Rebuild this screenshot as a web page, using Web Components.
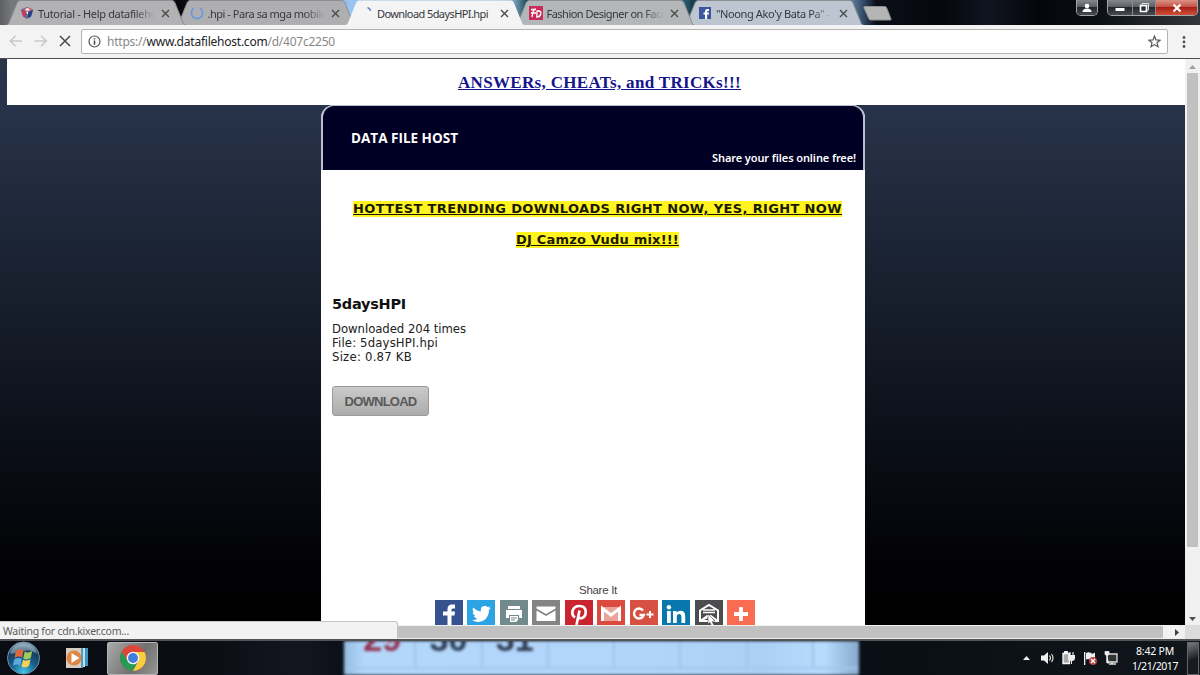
<!DOCTYPE html>
<html lang="en">
<head>
<meta charset="utf-8">
<title>Download 5daysHPI.hpi</title>
<style>
  html, body { margin: 0; height: 100%; overflow: hidden; }
  body { font-family: "Noto Sans", sans-serif; }
</style>
</head>
<body>
<desktop-screen></desktop-screen>

<script>
function define(name, html, setup) {
  customElements.define(name, class extends HTMLElement {
    connectedCallback() {
      if (this.shadowRoot) return;
      this.attachShadow({ mode: "open" });
      this.shadowRoot.innerHTML = typeof html === "function" ? html(this) : html;
      if (setup) setup(this);
    }
  });
}

const FAVICONS = {
  cube: `<path d="M1 3.500 7 1l6 2.500-2 7L7 13 3 10.500z" fill="#5a69a5"/><path d="m1 3.500 5 2.500v6L3 10z" fill="#c33b54"/><path d="m7 1 6 2.500L7 6 3 4z" fill="#d65a68"/><path d="M8 6.500 13 4l-2 6.500L8 12z" fill="#263f86"/><path d="m5 3 3-1 2 2-3 1zM6 6l2-.5V9z" fill="#eee"/>`,
  spinner: `<path d="M4 2.200a5.600 5.600 0 1 0 6 0" fill="none" stroke="#6d9bd8" stroke-width="1.900"/>`,
  tick: `<path d="M8.500 1.500q2.500.8 3.200 3.200" fill="none" stroke="#5c82c4" stroke-width="1.600"/>`,
  fd: `<path fill="#c92c5c" d="M0 0h14v14H0z"/><path d="M2 3.500h5M4.500 3.500 3 11M2 7h5M8 5h1.500q3 0 2.300 3-.7 3-4 3zM6.500 2.500l-1 2" fill="none" stroke="#fff" stroke-width="1.300"/>`,
  fb: `<path fill="#3b579d" d="M1 1h12v12H1z"/><path d="M7 13V8.500H5.500v-2H7V5.300Q7 3 9.300 3H11v2H9.700q-.6 0-.6.700v.8H11l-.3 2H9.100V13z" fill="#fff"/>`,
};

define("browser-tab", el => `
  <style>
    :host { display: block; flex: none; position: relative; width: 179.500px; height: 25px; margin-right: -10px; z-index: var(--z, 1); }
    .shape { position: absolute; inset: 0; }
    .row { position: relative; display: flex; align-items: center; height: 26px; padding-left: 14px; }
    .icon { flex: none; }
    .title { width: 118px; margin-left: 4px; overflow: hidden; white-space: nowrap; font-size: 11px; color: #35383c;
      -webkit-mask: linear-gradient(90deg, #000 82%, transparent 99%); }
    :host([active]) .title { -webkit-mask: none; }
    .close { margin-left: 5px; }
  </style>
  <svg class="shape" width="180" height="25">
    <path d="M0 25.500 2.500 24 11 3Q12 .5 14 .5H166Q168 .5 169 3L177.500 24 180 25.500z"
      fill="${el.getAttribute("fill")}" stroke="${el.hasAttribute("active") ? "none" : "#8b8d91"}"/>
  </svg>
  <div class="row">
    <svg class="icon" width="14" height="14">${FAVICONS[el.getAttribute("icon")]}</svg>
    <div class="title"><slot></slot></div>
    <svg class="close" width="9" height="9"><path d="m1 1 7 7M8 1 1 8" stroke="#4a4a4a" stroke-width="1.400"/></svg>
  </div>
`);

define("window-buttons", `
  <style>
    :host { display: flex; gap: 9px; align-items: flex-start; }
    .group { display: flex; height: 15px; border: 1px solid #a3a5aa; border-top: 0; border-radius: 0 0 5px 5px; overflow: hidden; }
    .b { display: flex; align-items: center; justify-content: center; height: 15px;
      background: linear-gradient(#85888d, #5b5e63 45%, #24272c 50%, #484b50); }
    .b + .b { border-left: 1px solid #8a8c91; }
    .close { background: linear-gradient(#d99386, #c55445 45%, #a92015 50%, #cf5038); }
  </style>
  <div class="group"><div class="b" style="width:20px"><svg width="12" height="12"><circle cx="6" cy="4" r="2.300" fill="#fff"/><path d="M1.500 10q0-3.500 4.500-3.500t4.500 3.500z" fill="#fff"/></svg></div></div>
  <div class="group">
    <div class="b" style="width:24px"><svg width="12" height="10"><path fill="#fff" d="M1.500 5h9v3h-9z"/></svg></div>
    <div class="b" style="width:22px"><svg width="12" height="12"><path d="M4 3V1.500h6.500V8H9" fill="none" stroke="#ddd"/><path d="M2.500 3.500h6v6h-6z" fill="none" stroke="#fff" stroke-width="1.700"/></svg></div>
    <div class="b close" style="width:41px"><svg width="12" height="10"><path d="m2.500 1.500 7 7m0-7-7 7" stroke="#fff" stroke-width="2.200"/></svg></div>
  </div>
`);

define("tab-strip", `
  <style>
    :host { display: flex; height: 25px; padding-left: 6px;
      background: linear-gradient(90deg, #5e6064 0, #77787c 12px, #24252c 165px, #050609 178px, #171b23 200px, #7eaee0 335px, #9ac5f0 350px, #94b9d8 510px, #1d4c59 527px, #5f98bd 670px, #163f4d 692px, #8bb3da 840px, #344c69 863px, #0b0f18 876px, #05070c 940px, #101520 990px, #03050a 1040px, #0c1017 1100px, #34373d 1200px); }
    .new { margin: 6px 0 0 9px; }
    window-buttons { margin: 0 2px 0 auto; }
  </style>
  <browser-tab icon="cube" fill="#b2b2b4" style="--z:4"><fit-text width="119">Tutorial - Help datafileho</fit-text></browser-tab>
  <browser-tab icon="spinner" fill="#afafb1" style="--z:3"><fit-text width="119">.hpi - Para sa mga mobile</fit-text></browser-tab>
  <browser-tab icon="tick" fill="#f4f4f4" active style="--z:6"><fit-text width="111">Download 5daysHPI.hpi</fit-text></browser-tab>
  <browser-tab icon="fd" fill="#b3b7ba" style="--z:3"><fit-text width="120">Fashion Designer on Face</fit-text></browser-tab>
  <browser-tab icon="fb" fill="#bdc5d1" style="--z:2"><fit-text width="114">"Noong Ako'y Bata Pa" -</fit-text></browser-tab>
  <svg class="new" width="30" height="15"><path d="M1.500.500h20q1.500 0 2 1l4.500 11.500q.5 1-1 1H8q-1.500 0-2-1L1 2q-.500-1.500.500-1.500z" fill="#b5b5b5" stroke="#8e9092"/></svg>
  <window-buttons></window-buttons>
`);

define("tool-bar", `
  <style>
    :host { display: flex; align-items: flex-start; box-sizing: border-box; height: 34px; background: #f3f3f3; border-bottom: 1px solid #4b5057; padding: 4px 0 0 8px; }
    .box { display: flex; align-items: center; box-sizing: border-box; width: 1087px; height: 25px; margin-left: 9px; padding: 0 6px; background: #fff; border: 1px solid #b4b4b4; border-radius: 2px; }
    .url { margin-left: 6px; font-size: 12px; color: #888; }
    b { font-weight: 400; color: #222; }
    .star { margin-left: auto; }
    .nav { margin-top: 4px; }
    .menu { margin: 6px 0 0 12px; }
  </style>
  <svg class="nav" width="64" height="16" fill="none" stroke-width="1.600">
    <path d="M14 8H2.500M7.500 2.800 2.300 8l5.200 5.200" stroke="#c9c9c9"/>
    <path d="M26.500 8H38M33 2.800 38.200 8 33 13.200" stroke="#c9c9c9"/>
    <path d="m52 3 10 10M62 3 52 13" stroke="#484848" stroke-width="1.500"/>
  </svg>
  <div class="box">
    <svg width="13" height="13"><circle cx="6.500" cy="6.500" r="5.500" fill="none" stroke="#555" stroke-width="1.200"/><path d="M6.500 5.500v4.200M6.500 3.200v1.300" stroke="#444" stroke-width="1.500"/></svg>
    <div class="url"><fit-text width="228">https://<b>www.datafilehost.com</b>/d/407c2250</fit-text></div>
    <svg class="star" width="13" height="13"><path d="m6.500 1.200 1.500 3.700 4 .3-3 2.600 1 3.900-3.500-2.100L3 11.700l1-3.900-3-2.600 4-.3z" fill="none" stroke="#555" stroke-width="1.200"/></svg>
  </div>
  <svg class="menu" width="8" height="14" fill="#505050"><circle cx="4" cy="2.500" r="1.400"/><circle cx="4" cy="7" r="1.400"/><circle cx="4" cy="11.500" r="1.400"/></svg>
`);

const SHARES = [
  ["#36528f", `<path d="M12.500 25V15.500H8v-4h4.500V9q0-4.500 4.500-4.500h3v4h-2q-1.500 0-1.500 1.300v1.700h3.500l-.5 4h-3V25z"/>`],
  ["#2ba3e5", `<path d="M5 20q3.300.3 5.300-1.500-2.500-.2-3.500-2.600h1.500Q5.700 15 5.600 12l1.500.4Q4.700 10 6.300 7.500q3 3.600 7.500 3.900Q13.300 6 18 6q1.800 0 3 1.200l2.400-1L22 8.300l2-.5-2 2.100Q22 17 16.500 20.500 11 23.500 5 20z"/>`],
  ["#738a8d", `<path d="M8 6h12v3H8zM6 10h16v8h-3v-3H9v3H6zM10 16h8v4l-2 2h-6z"/><path d="M11 18h6M11 20h4" stroke="#738a8d"/>`],
  ["#848484", `<path d="M4.500 6.500h19v2L14 14 4.500 8.500zM4.500 10.500 14 16l9.500-5.500V21h-19z"/>`],
  ["#cb2431", `<path d="M10 17.500Q6.500 15 7.500 11q1.500-5 7-5t6.200 5q.3 6-4.200 7.200-2.200.3-3-1.200M14.500 10.500 11.500 25" fill="none" stroke="#fff" stroke-width="2.700"/>`],
  ["#db4a3f", `<path d="M4 7h20v14H4z" fill="#e9a39b"/><path d="M5.500 21V8.500L14 15l8.500-6.500V21" fill="none" stroke="#fff" stroke-width="3"/>`],
  ["#d85042", `<path d="M13 10.500a5 5 0 1 0 .8 4.500H9.500" fill="none" stroke="#fff" stroke-width="2.400"/><path d="M20 11v7M16.500 14.500h7" stroke="#fff" stroke-width="2"/>`],
  ["#0877ac", `<path d="M5 11h3.800v12H5zM11 11h3.600v1.800q1.200-2.100 4-2.100 4.600 0 4.600 5.500V23h-3.800v-6q0-3-2.200-3-2.400 0-2.400 3v6H11z"/><circle cx="6.900" cy="7.200" r="2.200"/>`],
  ["#4d4c4e", `<path d="M5 10.500 14 5l9 5.500V21H5z" fill="none" stroke="#fff" stroke-width="2"/><path d="M8 10h12M8 12.500h12" stroke="#fff" stroke-width="1.600"/><path d="m5 20 7-5h4l7 5v2l-8-5-10 5z"/><path d="m13 14 7 7-3 .5 2 3.500-2.500 1-1.500-3.500L13 24z" stroke="#4d4c4e" stroke-width=".6"/>`],
  ["#fa6c51", `<path d="M14 7v14M7 14h14" stroke="#fff" stroke-width="3.800"/>`],
];

define("share-row", `
  <style>
    :host { display: block; width: 320px; }
    .label { text-align: center; margin-left: 6px; font: 11.500px/14px "Liberation Sans", sans-serif; color: #444; }
    .row { display: flex; gap: 4.450px; margin-top: 3px; }
    svg { flex: none; }
  </style>
  <div class="label"><fit-text width="38">Share It</fit-text></div>
  <div class="row">${SHARES.map(([bg, art]) => `<svg width="28" height="28" fill="#fff"><rect width="28" height="28" fill="${bg}"/>${art}</svg>`).join("")}</div>
`);

define("file-card", `
  <style>
    :host { display: flex; flex-direction: column; width: 544px; height: 560px; background: #fff; border-radius: 13px 13px 0 0; font-family: "DejaVu Sans", sans-serif; color: #222; }
    header { display: flex; flex-direction: column; box-sizing: border-box; height: 65px; border: 2px solid #b9bed0; border-top-width: 1px; border-bottom: 0; border-radius: 13px 13px 0 0; background: #000025; color: #fff; padding: 23px 7px 0 28px; }
    .brand { font: bold 13.500px/18px "Open Sans", sans-serif; }
    .tag { margin: 4px 0 0 auto; font: 600 11px/14px "Noto Sans", sans-serif; }
    .hot { display: flex; flex-direction: column; align-items: center; gap: 15px; margin: 31px 0 0 9px; font: bold 13px/16px "DejaVu Sans", sans-serif; color: #191a00; }
    .hot fit-text { background: #fff41f; text-decoration: underline; height: 16px; }
    .info { padding: 47px 0 0 11px; font-size: 11.700px; line-height: 14px; }
    h1 { margin: 0 0 9px; font-size: 14.500px; line-height: 18px; color: #111; }
    .info div { height: 14px; }
    button { display: flex; align-items: center; justify-content: center; width: 97px; height: 30px; margin: 22px 0 0; padding: 0; border: 1px solid #999; border-radius: 3px; background: linear-gradient(#cacaca, #acacac); font: bold 13px "Liberation Sans", sans-serif; color: #595959; }
    share-row { margin: 167px 0 0 114px; }
  </style>
  <header>
    <div class="brand"><fit-text width="107">DATA FILE HOST</fit-text></div>
    <div class="tag"><fit-text width="144">Share your files online free!</fit-text></div>
  </header>
  <div class="hot">
    <fit-text width="489">HOTTEST TRENDING DOWNLOADS RIGHT NOW, YES, RIGHT NOW</fit-text>
    <fit-text width="163">DJ Camzo Vudu mix!!!</fit-text>
  </div>
  <div class="info">
    <h1><fit-text width="74">5daysHPI</fit-text></h1>
    <div><fit-text width="134">Downloaded 204 times</fit-text></div>
    <div><fit-text width="106">File: 5daysHPI.hpi</fit-text></div>
    <div><fit-text width="80">Size: 0.87 KB</fit-text></div>
    <button><fit-text width="72">DOWNLOAD</fit-text></button>
  </div>
  <share-row></share-row>
`);

define("web-page", `
  <style>
    :host { display: flex; flex-direction: column; flex: 1; overflow: hidden; background: linear-gradient(#293449 0, #27334a 50px, #1c2535 180px, #0c1019 370px, #020205 510px, #000 567px); }
    .ad { flex: none; box-sizing: border-box; height: 46px; margin: 0 0 0 7px; padding-top: 14px; background: #fff; text-align: center; font: bold 17px/20px "Liberation Serif", serif; color: #14148c; }
    .ad fit-text { text-decoration: underline; margin-left: 7px; }
    file-card { flex: none; margin-left: 321px; }
  </style>
  <div class="ad"><fit-text width="283">ANSWERs, CHEATs, and TRICKs!!!</fit-text></div>
  <file-card></file-card>
`);

define("page-view", `
  <style>
    :host { display: flex; flex-direction: column; position: relative; height: 582px; box-sizing: border-box; border-bottom: 2px solid #51555a; background: #f1f1f1; }
    .main { display: flex; height: 566px; }
    .v { display: flex; flex-direction: column; align-items: center; justify-content: space-between; width: 15px; box-sizing: border-box; padding: 6px 0 4px; }
    .vt { width: 11px; height: 474px; margin: 4px 0 auto; background: #c1c1c1; }
    .h { display: flex; align-items: center; height: 14px; padding-left: 17px; }
    .ht { width: 1146px; height: 12px; background: #c1c1c1; }
    .h svg { margin-left: 12px; }
    .corner { width: 15px; height: 14px; margin-left: auto; background: #dcdcdc; }
    .status { position: absolute; left: 0; bottom: 0; box-sizing: border-box; width: 398px; height: 18px; padding-left: 3px; border: solid #c5c5c5; border-width: 1px 1px 0 0; border-radius: 0 3px 0 0; background: #f2f2f2; font: 10.500px/18px "Noto Sans", sans-serif; color: #5c5c5c; }
  </style>
  <div class="main">
    <web-page></web-page>
    <div class="v">
      <svg width="7" height="4"><path d="M0 4h7L3.500 0z" fill="#a0a0a0"/></svg>
      <div class="vt"></div>
      <svg width="7" height="4"><path d="M0 0h7L3.500 4z" fill="#505050"/></svg>
    </div>
  </div>
  <div class="h"><div class="ht"></div><svg width="4" height="7"><path d="M0 0v7l4-3.500z" fill="#404040"/></svg><div class="corner"></div></div>
  <div class="status"><fit-text width="126">Waiting for cdn.kixer.com...</fit-text></div>
`);

// Wallpaper calendar that shows through the glass taskbar
define("glass-calendar", `
  <style>
    :host { display: block; width: 515px; height: 34px; background: linear-gradient(90deg, #93bbe0, #b2d7fb 20px, #b1d5fa 300px, #accff5 420px, #b8dcfd 480px, #86aacd); filter: blur(1.500px); }
    .row { display: flex; height: 26px; padding-left: 6px; border-bottom: 2px solid #a3c7eb; }
    .cell { box-sizing: border-box; width: 66.300px; border-right: 2px solid #a0c3e7; text-align: center; font: bold 34px/28px "Liberation Sans", sans-serif; color: #2c3a51; }
    span { display: block; margin-top: -16px; }
    .sun { color: #93304d; }
  </style>
  <div class="row">
    <div class="cell sun"><span>29</span></div><div class="cell"><span>30</span></div><div class="cell"><span>31</span></div>
    <div class="cell"></div><div class="cell"></div><div class="cell"></div><div class="cell"></div>
  </div>
`);

define("system-tray", `
  <style>
    :host { display: flex; align-items: center; height: 34px; color: #fff; }
    .clock { display: flex; flex-direction: column; align-items: center; width: 50px; margin: 1px 0 0 12px; font: 10.500px/15px "Noto Sans", sans-serif; }
    .desk { box-sizing: border-box; width: 12px; height: 33px; margin-left: 7px; border: 1px solid #62656a; background: linear-gradient(160deg, #777a7e, #181a1f 55%); }
  </style>
  <svg width="98" height="20" fill="#eee">
    <path d="M3 12h7L6.500 8z"/>
    <path d="M21 7.500h3L28 4v12l-4-3.500h-3z"/><path d="M29.500 7.500q2 2.500 0 5M31.500 6q3 4 0 8" fill="none" stroke="#ddd" stroke-width="1.200"/>
    <path d="M43 5.500h6.500v10H43z" fill="#aaa" stroke="#fff" stroke-width="1.300"/><path d="M44.500 3.500h3v2h-3zM50 4v3m3-3v3" stroke="#fff"/><path d="M48 7h7v3q0 3-3 3v3h-1v-3q-3 0-3-3z"/>
    <path d="M64 4h1.300v13H64z"/><path d="M66 5q3-1.500 5 0t4-.5V11q-3 1.500-5 .5t-4 0z"/><circle cx="73" cy="13" r="4" fill="#b94540"/><path d="m71 11 4 4m0-4-4 4" stroke="#fff" stroke-width="1.300"/>
    <path d="M87 6h10v8H87z" fill="#333" stroke="#ddd" stroke-width="1.300"/><path d="M89 16h7M92 14v2" stroke="#ddd" stroke-width="1.500"/><path d="M85 3.500v3q2 2 4 0v-3zM87 7v8h2" stroke="#eee" stroke-width=".8"/>
  </svg>
  <div class="clock"><fit-text width="38">8:42 PM</fit-text><fit-text width="46">1/21/2017</fit-text></div>
  <div class="desk"></div>
`);

define("task-bar", `
  <style>
    :host { display: flex; align-items: center; height: 34px; overflow: hidden; background: linear-gradient(90deg, #090c13, #0a0d14 200px, #15151f 300px, #0b0f17 345px, #0a0e15 900px, #11151c); }
    .orb { margin-left: 6px; }
    .wmp { margin-left: 24px; }
    .app { display: flex; align-items: center; justify-content: center; box-sizing: border-box; width: 51px; height: 33px; margin-left: 18px; border: 1px solid #b5b5b5; border-radius: 2px; background: linear-gradient(120deg, #a9a9a8, #70716f 60%, #979793); }
    glass-calendar { margin-left: 186px; }
    system-tray { margin-left: auto; margin-right: 1px; }
  </style>
  <svg class="orb" width="35" height="34">
    <defs>
      <radialGradient id="g" cx=".5" cy=".95" r=".9"><stop offset="0" stop-color="#41c8ee"/><stop offset=".45" stop-color="#18608c"/><stop offset=".8" stop-color="#163b59"/><stop offset="1" stop-color="#87a2b4"/></radialGradient>
    </defs>
    <circle cx="17.500" cy="17" r="16" fill="url(#g)" stroke="#6e8fa5"/>
    <path d="M4 13Q7 3 17.500 3T31 13q-6-5-13.500-3T4 13" fill="#b6cbd8" opacity=".5"/>
    <path d="M10 10q4-2.500 7.500-.5l-1.500 7q-3.500-2-7.500.5z" fill="#e3653a"/><path d="M18.700 10.500q3.500 2 7.500-.5l-1.500 7q-4 2.500-7.500.5z" fill="#a3c95b"/>
    <path d="M8.300 18.300q4-2.500 7.500-.5l-1.500 6.700q-3.500-2-7.500.5z" fill="#5da9df"/><path d="M17 18.700q3.500 2 7.500-.5L23 25q-4 2.500-7.500.5z" fill="#f4d258"/>
  </svg>
  <svg class="wmp" width="24" height="24">
    <path d="M7 2h16v18H7z" fill="#3d94c4"/><path d="M5 2h15v19H5z" fill="#bce1f2"/><path d="M4 2h14v20H4z" fill="#549bbb"/><path d="M1 2h15v20H1z" fill="#d6ccc1"/>
    <circle cx="9" cy="12" r="7.500" fill="#e0853f"/><path d="m6.500 7 8 5-8 5z" fill="#fff"/>
  </svg>
  <div class="app">
    <svg width="28" height="28">
      <circle cx="14" cy="14" r="13" fill="#dc463b"/>
      <path d="M2.740 7.500A13 13 0 0 0 14 27l5-10-10 .5z" fill="#279b55"/>
      <path d="M25.500 8A13 13 0 0 1 14 27l5.500-10.200L16 8z" fill="#f7cf3e"/>
      <circle cx="14" cy="14" r="6.300" fill="#f5f5f5"/><circle cx="14" cy="14" r="4.900" fill="#3f7cdc"/>
    </svg>
  </div>
  <glass-calendar></glass-calendar>
  <system-tray></system-tray>
`);

define("desktop-screen", `
  <style>
    :host { display: flex; flex-direction: column; width: 1200px; height: 675px; overflow: hidden; }
  </style>
  <tab-strip></tab-strip>
  <tool-bar></tool-bar>
  <page-view></page-view>
  <task-bar></task-bar>
`);

// Spreads its text to the given width with letter-spacing.
// Defined last, so that everything around it is already laid out.
define("fit-text", `
  <style>:host { display: inline-block; flex: none; white-space: nowrap; }</style><slot></slot>
`, el => {
  const target = Number(el.getAttribute("width"));
  const natural = el.getBoundingClientRect().width;
  el.style.letterSpacing = (target - natural) / el.textContent.length + "px";
});
</script>
</body>
</html>
